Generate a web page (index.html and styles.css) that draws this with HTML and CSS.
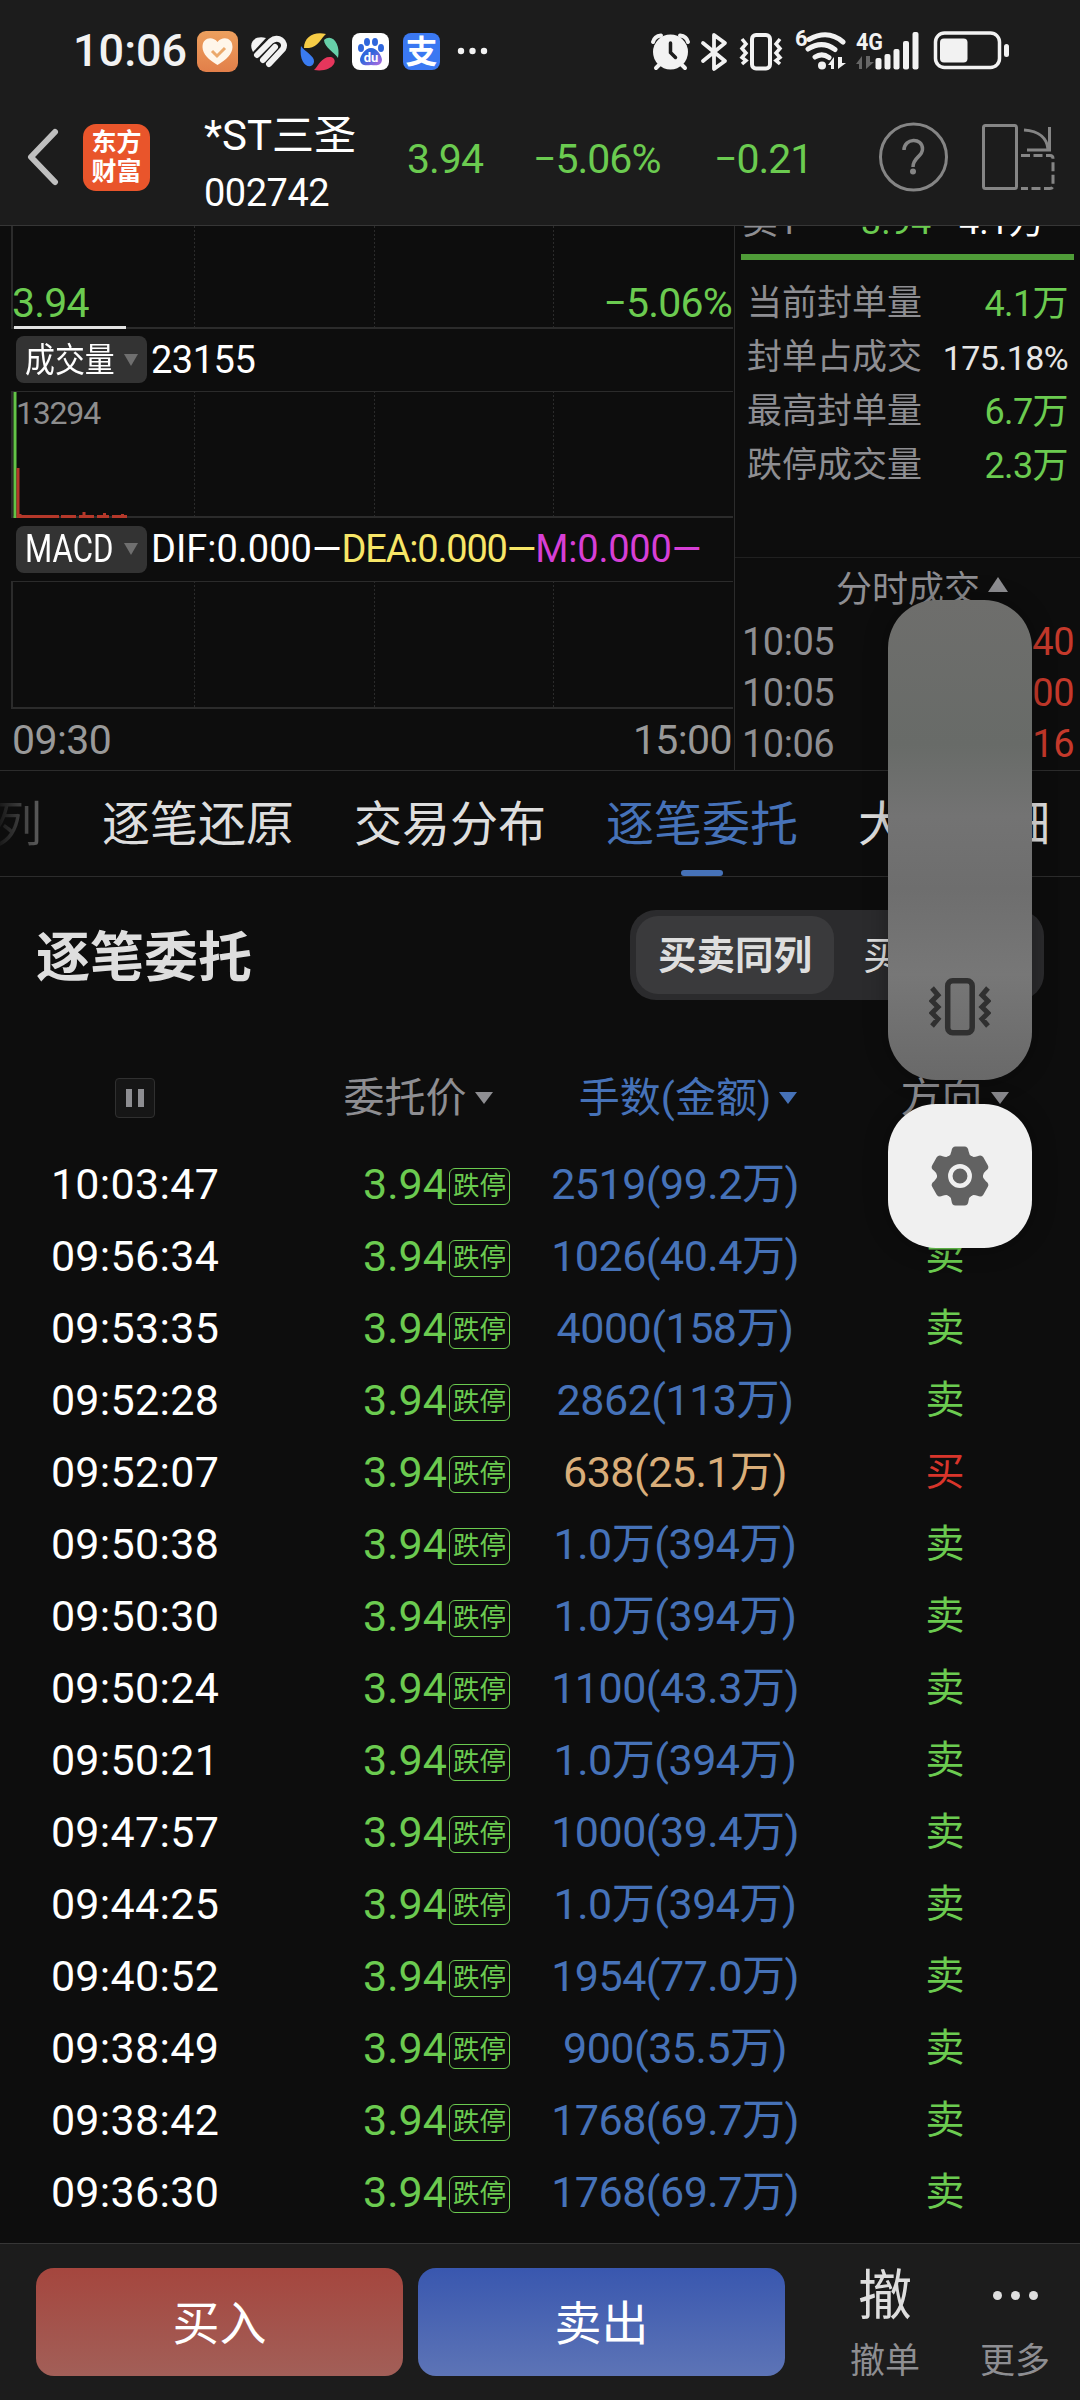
FILE: index.html
```html
<!DOCTYPE html>
<html lang="zh-CN">
<head>
    <meta charset="UTF-8">
    <meta name="viewport" content="width=device-width, initial-scale=1.0">
    <title>*ST三圣 002742</title>
    <link rel="stylesheet" href="styles.css">
</head>
<body>
    <header class="top">
        <div class="status-bar">
            <span class="clock">10:06</span>
            <svg class="status-left" width="300" height="50" viewBox="190 26 300 50">
                <defs>
                    <linearGradient id="orange" x1="0" y1="0" x2="0" y2="1">
                        <stop offset="0" stop-color="#eda05e"/>
                        <stop offset="1" stop-color="#e27f4a"/>
                    </linearGradient>
                    <linearGradient id="paw" x1="0" y1="0" x2="1" y2="1">
                        <stop offset="0.4" stop-color="#2f66dc"/>
                        <stop offset="1" stop-color="#b86be0"/>
                    </linearGradient>
                </defs>
                <!-- health -->
                <rect x="197" y="31" width="41" height="41" rx="9" fill="url(#orange)"/>
                <path d="M217.500 65C209 60 202.500 54 202.500 47C202.500 37 213 36 217.500 42C222 36 232.500 37 232.500 47C232.500 54 226 60 217.500 65Z" fill="#fff6ea"/>
                <path d="M212 51l5 5 8-8" fill="none" stroke="#eba96c" stroke-width="3"/>
                <!-- sport -->
                <path d="M253 52C248 43 254 35 266 38Z" fill="#f2f2f2"/>
                <g fill="none" stroke="#f2f2f2" stroke-width="6" stroke-linecap="round">
                    <path d="M257 55l14-14C278 35 287 42 283 49L269 64"/>
                    <path d="M263 60l12-13"/>
                </g>
                <!-- browser swirl -->
                <path d="M304 48C304 37 314 31 326 34C321 38 318 47 309 48Z" fill="#f6cc46"/>
                <path d="M324 40C332 33 341 44 338 58C335 53 324 47 324 40Z" fill="#67cfa9"/>
                <path d="M301 46C305 52 315 56 314 62C312 71 298 66 301 46Z" fill="#3a7bf0"/>
                <path d="M314 70C319 65 322 56 331 57C340 60 332 73 314 70Z" fill="#e6365c"/>
                <!-- baidu -->
                <rect x="352" y="33" width="37" height="37" rx="8" fill="#fff"/>
                <ellipse cx="361" cy="48" rx="3" ry="4" fill="#2f66dc"/>
                <ellipse cx="367" cy="42" rx="3" ry="4" fill="#2f66dc"/>
                <ellipse cx="375" cy="42" rx="3" ry="4" fill="#2f66dc"/>
                <ellipse cx="381" cy="48" rx="3" ry="4" fill="#2f66dc"/>
                <path d="M371 48C377 48 382 56 382 60C381 67 375 65 371 65C367 65 361 67 360 60C360 56 365 48 371 48Z" fill="url(#paw)"/>
                <text x="371" y="62" class="du" text-anchor="middle">du</text>
                <!-- alipay -->
                <rect x="403" y="33" width="37" height="37" rx="8" fill="#3a78f2"/>
                <text x="421.500" y="63" class="zhi" text-anchor="middle">支</text>
                <circle cx="461" cy="51" r="3.200" fill="#f2f2f2"/>
                <circle cx="472.500" cy="51" r="3.200" fill="#f2f2f2"/>
                <circle cx="484" cy="51" r="3.200" fill="#f2f2f2"/>
            </svg>
            <svg class="status-right" width="366" height="50" viewBox="646 26 366 50">
                <!-- alarm -->
                <g stroke="#f2f2f2" stroke-width="4" stroke-linecap="round" fill="none">
                    <path d="M653 42C654 38 657 36 661 35.500M688 42C687 38 684 36 680 35.500M660 64l-4 4M681 64l4 4"/>
                </g>
                <circle cx="670.500" cy="52" r="17.500" fill="#f2f2f2"/>
                <path d="M670.500 43v9.500l5 5" fill="none" stroke="#1c1c1c" stroke-width="3.500" stroke-linecap="round"/>
                <!-- bluetooth -->
                <path d="M703 43l22 18-11 8V35l11 8-22 18" fill="none" stroke="#f2f2f2" stroke-width="3.800" stroke-linejoin="round" stroke-linecap="round"/>
                <!-- vibrate -->
                <g fill="none" stroke="#f2f2f2" stroke-width="4">
                    <rect x="752" y="35" width="18" height="33.500" rx="4"/>
                    <path stroke-width="3.500" d="M742 39l4 5-4 4.500 4 4.500-4 4.500 4 3-4 3.500M780 39l-4 5 4 4.500-4 4.500 4 4.500-4 3 4 3.500"/>
                </g>
                <!-- wifi -->
                <g fill="none" stroke="#f2f2f2" stroke-width="5" stroke-linecap="round">
                    <path d="M809 39.500Q828 29 843 42M808 49Q822 40 835 49.500M815 57Q822 52.500 829 57.500"/>
                </g>
                <circle cx="822" cy="65.500" r="4" fill="#f2f2f2"/>
                <path d="M828 65l6-8v12h-3v-4zM838 57v12l8-6h-4v-6z" fill="#f2f2f2"/>
                <text x="795" y="46" class="net">6</text>
                <!-- signal -->
                <text x="856" y="50" class="net big" textLength="27" lengthAdjust="spacingAndGlyphs">4G</text>
                <path d="M856 64l6-8v13h-3v-5zM866 56v13l8-7h-4v-6z" fill="#666"/>
                <g fill="#f2f2f2">
                    <rect x="875.500" y="58" width="6" height="11.500" rx="2"/>
                    <rect x="884.500" y="54" width="6" height="15.500" rx="2"/>
                    <rect x="893.500" y="49" width="6" height="20.500" rx="2"/>
                    <rect x="903" y="41" width="6" height="28.500" rx="2"/>
                    <rect x="912.500" y="32" width="6" height="37.500" rx="2"/>
                </g>
                <!-- battery -->
                <rect x="935.500" y="33" width="64" height="34.500" rx="9" fill="none" stroke="#f2f2f2" stroke-width="3.500"/>
                <rect x="940" y="38.500" width="27.500" height="24" rx="4" fill="#f2f2f2"/>
                <rect x="1004" y="44" width="5" height="13" rx="2.500" fill="#f2f2f2"/>
            </svg>
        </div>
        <div class="title-bar">
            <svg class="back" width="34" height="58" viewBox="0 0 34 58">
                <path d="M29 4L5 29l24 25" fill="none" stroke="#bfbfbf" stroke-width="6" stroke-linecap="round" stroke-linejoin="round"/>
            </svg>
            <div class="logo">东方<br>财富</div>
            <div class="stock">
                <div class="stock-name">*ST三圣</div>
                <div class="stock-code">002742</div>
            </div>
            <div class="quote">
                <span>3.94</span>
                <span>−5.06%</span>
                <span>−0.21</span>
            </div>
            <svg class="title-icons" width="180" height="74" viewBox="877 120 180 74">
                <g fill="none" stroke="#858585" stroke-width="3">
                    <circle cx="913.500" cy="157" r="33"/>
                    <path stroke-width="3.500" d="M904 150C904 138 922.500 137 922.500 149C922.500 157 913 157 913 167"/>
                    <rect x="983.500" y="125.500" width="33" height="63" rx="2"/>
                    <path d="M1024 130C1040 131 1047 139 1048 149M1049.500 127v23H1027"/>
                    <path stroke-dasharray="9 3.500" d="M1021 155.500h29q3 0 3 3v27q0 3-3 3h-29"/>
                </g>
                <circle cx="913" cy="171.500" r="3" fill="#858585"/>
            </svg>
        </div>
    </header>

    <section class="market">
        <div class="charts">
            <div class="plot plot-price">
                <svg width="735" height="103">
                    <path class="grid-line" d="M12 0V103M12 102H733"/>
                    <path class="grid-dash" d="M194.500 0V101M374.500 0V101M553.500 0V101"/>
                    <path d="M14 102H126" stroke="#e2e2e2" stroke-width="4"/>
                </svg>
                <div class="axis-labels"><span>3.94</span><span>−5.06%</span></div>
            </div>
            <div class="indicator">
                <div class="chip"><span>成交量</span><i class="arrow"></i></div>
                <span class="volume">23155</span>
            </div>
            <div class="plot plot-volume">
                <svg width="735" height="127">
                    <path class="grid-line thin" d="M12 .5H733"/>
                    <path class="grid-line" d="M12 0V127M12 126H733"/>
                    <path class="grid-dash" d="M194.500 0V125M374.500 0V125M553.500 0V125"/>
                    <path d="M15 1V127" stroke="#63c447" stroke-width="3"/>
                    <path d="M18 77V127" stroke="#b5382a" stroke-width="3"/>
                    <path d="M20 123v4M20 125.500H59M61 125.500H76M79 125.500H94M97 125.500H109M112 125.500H127" stroke="#b5382a" stroke-width="3"/>
                    <path d="M84 121v5M104.500 122v4M122.500 123v3" stroke="#b5382a" stroke-width="3"/>
                </svg>
                <span class="peak">13294</span>
            </div>
            <div class="indicator indicator-macd">
                <div class="chip"><span>MACD</span><i class="arrow"></i></div>
                <span class="dif">DIF:0.000—</span>
                <span class="dea">DEA:0.000—</span>
                <span class="m">M:0.000—</span>
            </div>
            <div class="plot plot-macd">
                <svg width="735" height="128">
                    <path class="grid-line thin" d="M12 .5H733"/>
                    <path class="grid-line" d="M12 0V128M12 127H733"/>
                    <path class="grid-dash" d="M194.500 0V126M374.500 0V126M553.500 0V126"/>
                </svg>
            </div>
            <div class="times"><span>09:30</span><span>15:00</span></div>
        </div>

        <aside class="depth">
            <div class="ask"><span>卖1</span><span class="green">3.94</span><span class="white">4.1万</span></div>
            <div class="depth-bar"></div>
            <ul class="limit">
                <li><span>当前封单量</span><b>4.1万</b></li>
                <li><span>封单占成交</span><b class="ratio">175.18%</b></li>
                <li><span>最高封单量</span><b>6.7万</b></li>
                <li><span>跌停成交量</span><b>2.3万</b></li>
            </ul>
            <div class="trades-title">分时成交<i class="arrow-up"></i></div>
            <ul class="trades">
                <li><span>10:05</span><b>40</b></li>
                <li><span>10:05</span><b>00</b></li>
                <li><span>10:06</span><b>16</b></li>
            </ul>
        </aside>
    </section>

    <nav class="tabs">
        <span class="tab faded">列</span>
        <span class="tab">逐笔还原</span>
        <span class="tab">交易分布</span>
        <span class="tab active">逐笔委托</span>
        <span class="tab">大单明细</span>
    </nav>

    <main class="orders">
        <div class="orders-head">
            <h2>逐笔委托</h2>
            <div class="switch">
                <span class="on">买卖同列</span>
                <span>买卖分列</span>
            </div>
        </div>
        <div class="row row-head">
            <div class="c-time"><span class="pause"></span></div>
            <div class="c-price">委托价<i class="sort"></i></div>
            <div class="c-amount">手数(金额)<i class="sort"></i></div>
            <div class="c-side">方向<i class="sort"></i></div>
        </div>
        <div id="list"></div>
    </main>

    <footer class="trade-bar">
        <button class="buy">买入</button>
        <button class="sell">卖出</button>
        <div class="action cancel"><span class="glyph">撤</span><span>撤单</span></div>
        <div class="action more"><span class="glyph dots"><i></i><i></i><i></i></span><span>更多</span></div>
    </footer>

    <!-- system volume panel -->
    <div class="volume-slider">
        <svg width="62" height="60" viewBox="0 0 62 60">
            <g fill="none" stroke="#303030" stroke-width="5.500">
                <rect x="18.700" y="3.700" width="24.500" height="52" rx="5"/>
                <path stroke-width="5" d="M3 11l6 7-6 6 6 6-6 6 6 6-6 7M59 11l-6 7 6 6-6 6 6 6-6 6 6 7"/>
            </g>
        </svg>
    </div>
    <div class="volume-settings">
        <svg width="60" height="62" viewBox="-30 -31 60 62">
            <g fill="#626262">
                <circle r="23"/>
                <path id="tooth" d="M-12 -19Q-9 -21 -8.500 -25Q-8 -29.500 -4.500 -29.500H4.500Q8 -29.500 8.500 -25Q9 -21 12 -19L8 0H-8Z"/>
                <use href="#tooth" transform="rotate(60)"/>
                <use href="#tooth" transform="rotate(120)"/>
                <use href="#tooth" transform="rotate(180)"/>
                <use href="#tooth" transform="rotate(240)"/>
                <use href="#tooth" transform="rotate(300)"/>
            </g>
            <circle r="9.700" fill="none" stroke="#f0f0f0" stroke-width="4.500"/>
        </svg>
    </div>

    <script src="script.js"></script>
</body>
</html>
```

FILE: styles.css
```css
* {
    margin: 0;
    padding: 0;
    box-sizing: border-box;
}

body {
    position: relative;
    width: 1080px;
    height: 2400px;
    overflow: hidden;
    display: flex;
    flex-direction: column;
    background-color: #0d0d0d;
    color: #fff;
    font-family: Roboto, "Noto Sans CJK SC", sans-serif;
    font-size: 40px;
    white-space: nowrap;
}

ul {
    list-style: none;
}

b, i {
    font-weight: normal;
    font-style: normal;
}

svg {
    display: block;
    flex: none;
}

.green {
    color: #6bcb50;
}

.white {
    color: #fff;
}

/* status + title */
.top {
    height: 226px;
    background-color: #1c1c1c;
    border-bottom: 1px solid #363636;
}

.status-bar {
    height: 102px;
    display: flex;
    align-items: center;
    padding-left: 73px;
}

.clock {
    width: 117px;
    font-size: 45px;
    font-weight: 500;
    color: #f2f2f2;
    line-height: 50px;
}

.status-right {
    margin-left: 156px;
}

.du {
    font-size: 13px;
    font-weight: bold;
    fill: #fff;
}

.zhi {
    font-size: 32px;
    font-weight: bold;
    fill: #fff;
}

.net {
    font-size: 22px;
    font-weight: bold;
    fill: #f2f2f2;
}

.net.big {
    font-size: 24px;
}

.title-bar {
    display: flex;
    align-items: center;
    height: 110px;
    padding-left: 26px;
}

.logo {
    width: 67px;
    height: 67px;
    margin-left: 23px;
    padding-top: 4px;
    border-radius: 13px;
    background-color: #e9552b;
    font-size: 25px;
    font-weight: bold;
    line-height: 29px;
    text-align: center;
}

.stock {
    width: 203px;
    margin-left: 54px;
    padding-top: 13px;
}

.stock-name {
    font-size: 42px;
    line-height: 58px;
}

.stock-code {
    font-size: 38px;
    line-height: 56px;
    letter-spacing: -.5px;
}

.quote {
    display: flex;
    width: 470px;
    padding-top: 3px;
    color: #6bcb50;
    font-size: 41px;
    letter-spacing: -1px;
}

.quote span:nth-child(1) {
    width: 126px;
}

.quote span:nth-child(2) {
    width: 181px;
}

/* charts */
.market {
    display: flex;
    height: 545px;
    border-bottom: 1px solid #2c2c2c;
}

.charts {
    width: 735px;
    border-right: 1px solid #2c2c2c;
}

.plot {
    position: relative;
}

.plot svg {
    width: 734px;
}

.grid-line {
    fill: none;
    stroke: #2b2b2b;
    stroke-width: 2;
}

.grid-line.thin {
    stroke-width: 1;
}

.grid-dash {
    fill: none;
    stroke: #2b2b2b;
    stroke-width: 1;
    stroke-dasharray: 2 2;
}

.axis-labels {
    position: absolute;
    left: 12px;
    right: 2px;
    bottom: 1px;
    display: flex;
    justify-content: space-between;
    color: #6bcb50;
    font-size: 41px;
    line-height: 50px;
    letter-spacing: -.8px;
}

.indicator {
    display: flex;
    align-items: center;
    height: 62px;
    padding: 0 0 1px 16px;
    font-size: 38px;
    line-height: 48px;
}

.indicator-macd {
    height: 63px;
}

.chip {
    display: flex;
    align-items: center;
    width: 131px;
    height: 47px;
    margin-right: 4px;
    padding-left: 9px;
    border-radius: 8px;
    background-color: #333;
}

/* labels are squeezed so they fit the chip */
.chip span {
    width: 99px;
    font-size: 34px;
    transform: scaleX(0.88);
    transform-origin: left;
}

.indicator-macd .chip span {
    font-size: 38px;
    transform: scaleX(0.82);
}

.arrow {
    border: 7px solid transparent;
    border-top: 12px solid #6f6f6f;
    border-bottom: 0;
}

.volume {
    letter-spacing: -.5px;
}

.peak {
    position: absolute;
    left: 16px;
    top: 2px;
    color: #8d8d8d;
    font-size: 32px;
    line-height: 40px;
    letter-spacing: -1.2px;
}

.dea {
    color: #f7e667;
    letter-spacing: -1.2px;
}

.m {
    color: #d63fd6;
    letter-spacing: -.2px;
}

.times {
    display: flex;
    justify-content: space-between;
    padding: 0 2px 0 12px;
    color: #999;
    font-size: 41px;
    line-height: 62px;
    letter-spacing: -.6px;
}

/* right column */
.depth {
    flex: 1;
    display: flex;
    flex-direction: column;
    color: #8e8e92;
}

.ask {
    display: flex;
    height: 28px;
    padding-left: 7px;
    font-size: 36px;
    align-items: flex-end;
    overflow: hidden;
}

.ask span {
    height: 54px;
    line-height: 44px;
}

.ask span:nth-child(1) {
    width: 119px;
}

.ask span:nth-child(2) {
    width: 98px;
}

.depth-bar {
    height: 6px;
    margin: 0 6px;
    background-color: #4f9c38;
}

.limit {
    height: 300px;
    padding: 17px 12px 0 12px;
    border-bottom: 1px solid #202020;
}

.limit li {
    display: flex;
    justify-content: space-between;
    align-items: center;
    height: 54px;
    font-size: 35px;
    line-height: 54px;
}

.limit b {
    color: #6bcb50;
    font-size: 36px;
    letter-spacing: -.6px;
}

.limit .ratio {
    color: #e6e6e6;
    font-size: 34px;
}

.trades-title {
    display: flex;
    align-items: center;
    padding-left: 101px;
    height: 56px;
    font-size: 36px;
}

.arrow-up {
    margin: -4px 0 0 8px;
    border: 10.5px solid transparent;
    border-bottom: 15px solid #8e8e92;
    border-top: 0;
}

.trades {
    padding-top: 3px;
}

.trades li {
    display: flex;
    justify-content: space-between;
    padding: 0 6px 0 7px;
    font-size: 38px;
    line-height: 51px;
    letter-spacing: -.5px;
}

.trades b {
    color: #c5392b;
}

/* tabs */
.tabs {
    display: flex;
    gap: 60px;
    height: 106px;
    padding-left: 102px;
    border-bottom: 1px solid #2c2c2c;
    line-height: 108px;
    color: #dedede;
}

.tab {
    position: relative;
    flex: none;
    width: 192px;
    height: 105px;
    font-size: 48px;
}

.tab.faded {
    width: 48px;
    margin-left: -108px;
    background: linear-gradient(90deg, #101010, #606060);
    background-clip: text;
    color: transparent;
}

.tab.active {
    color: #4672b8;
}

.tab.active::after {
    content: "";
    position: absolute;
    left: 75px;
    bottom: 0;
    width: 42px;
    height: 6px;
    border-radius: 3px;
    background-color: #4672b8;
}

/* order list */
.orders {
    flex: 1;
}

.orders-head {
    display: flex;
    justify-content: space-between;
    height: 125px;
    padding: 33px 36px 0;
}

h2 {
    color: #dedede;
    font-size: 54px;
    line-height: 97px;
}

.switch {
    display: flex;
    width: 414px;
    height: 90px;
    padding: 6px;
    border-radius: 26px;
    background-color: #2b2b2d;
    color: #dedede;
    font-size: 38.500px;
    line-height: 79px;
}

.switch span {
    width: 198px;
    text-align: center;
}

.switch span + span {
    width: 204px;
    padding-left: 8px;
}

.switch .on {
    border-radius: 22px;
    background-color: #3a3a3c;
    font-weight: bold;
}

.row {
    display: grid;
    grid-template-columns: 270px 290px 230px 290px;
    height: 72px;
    font-size: 43px;
    line-height: 72px;
}

.row > div {
    display: flex;
    align-items: center;
    justify-content: center;
}

.c-time {
    letter-spacing: .3px;
}

.row-head {
    height: 92px;
    margin: 50px 0 4px;
    color: #8e8e92;
    font-size: 41px;
}

.pause {
    width: 40px;
    height: 40px;
    border: 1px solid #303030;
    border-radius: 4px;
    background: linear-gradient(90deg, #8e8e92 6px, transparent 6px 12px, #8e8e92 12px) center / 18px 18px no-repeat #161616;
}

.sort {
    margin-left: 8px;
    border: 9px solid transparent;
    border-top: 12px solid #8e8e92;
    border-bottom: 0;
}

.row .c-price {
    padding-left: 43px;
    color: #6bcb50;
}

.row .c-amount {
    color: #4672b8;
    letter-spacing: -.5px;
}

.row .c-side {
    padding-left: 20px;
    color: #6bcb50;
    font-size: 39px;
}

.row-head .c-price {
    padding-left: 6px;
    color: #8e8e92;
}

.row-head .c-amount {
    padding-left: 26px;
    letter-spacing: 0;
}

.row-head .c-amount .sort {
    border-top-color: #4672b8;
}

.row-head .c-side {
    padding-left: 39px;
    color: #8e8e92;
    font-size: 41px;
}

.row .c-amount.big {
    color: #d9ae7a;
}

.row .c-side.buy-side {
    color: #d8352b;
}

.tag {
    width: 61px;
    height: 37px;
    margin: 4px 0 0 2px;
    border: 1px solid #6bcb50;
    border-radius: 6px;
    font-size: 26.500px;
    line-height: 34px;
    text-align: center;
}

/* bottom bar */
.trade-bar {
    display: flex;
    height: 157px;
    padding: 24px 0 0 36px;
    border-top: 1px solid #363636;
    background-color: #1c1c1c;
}

button {
    width: 367px;
    height: 108px;
    margin-right: 15px;
    padding-bottom: 5px;
    border: none;
    border-radius: 18px;
    color: #fff;
    font-family: inherit;
    font-size: 47px;
}

.buy {
    background: linear-gradient(#a5463e, #a25f58);
}

.sell {
    background: linear-gradient(#3957af, #5d74b6);
}

.action {
    display: flex;
    flex-direction: column;
    align-items: center;
    width: 130px;
    color: #8e8e92;
    font-size: 35px;
    line-height: 76px;
}

.cancel {
    margin-left: 20px;
}

.glyph {
    height: 56px;
    color: #dedede;
    font-size: 54px;
    line-height: 58px;
}

.dots {
    display: flex;
    gap: 9px;
    padding-top: 23px;
}

.dots i {
    width: 9px;
    height: 9px;
    border-radius: 50%;
    background-color: #dedede;
}

/* floating volume panel */
.volume-slider,
.volume-settings {
    position: absolute;
    left: 888px;
    width: 144px;
    display: flex;
    justify-content: center;
    border-radius: 48px;
    box-shadow: 0 0 24px rgba(0, 0, 0, 0.3);
}

.volume-slider {
    top: 600px;
    height: 480px;
    align-items: flex-end;
    padding-bottom: 43px;
    background: linear-gradient(#6e6e6c, #686b68 30%, #737373 45%, #6e6e6e 60%, #777 78%, #696969);
}

.volume-settings {
    top: 1104px;
    height: 144px;
    align-items: center;
    background-color: #f0f0f0;
}
```

FILE: script.js
```js
const orders = [
    ["10:03:47", "2519(99.2万)", "卖"],
    ["09:56:34", "1026(40.4万)", "卖"],
    ["09:53:35", "4000(158万)", "卖"],
    ["09:52:28", "2862(113万)", "卖"],
    ["09:52:07", "638(25.1万)", "买"],
    ["09:50:38", "1.0万(394万)", "卖"],
    ["09:50:30", "1.0万(394万)", "卖"],
    ["09:50:24", "1100(43.3万)", "卖"],
    ["09:50:21", "1.0万(394万)", "卖"],
    ["09:47:57", "1000(39.4万)", "卖"],
    ["09:44:25", "1.0万(394万)", "卖"],
    ["09:40:52", "1954(77.0万)", "卖"],
    ["09:38:49", "900(35.5万)", "卖"],
    ["09:38:42", "1768(69.7万)", "卖"],
    ["09:36:30", "1768(69.7万)", "卖"]
];

document.getElementById("list").innerHTML = orders.map(([time, amount, side]) => {
    const buy = side === "买";
    return `<div class="row">
        <div class="c-time">${time}</div>
        <div class="c-price">3.94<span class="tag">跌停</span></div>
        <div class="c-amount ${buy ? "big" : ""}">${amount}</div>
        <div class="c-side ${buy ? "buy-side" : ""}">${side}</div>
    </div>`;
}).join("");
```
